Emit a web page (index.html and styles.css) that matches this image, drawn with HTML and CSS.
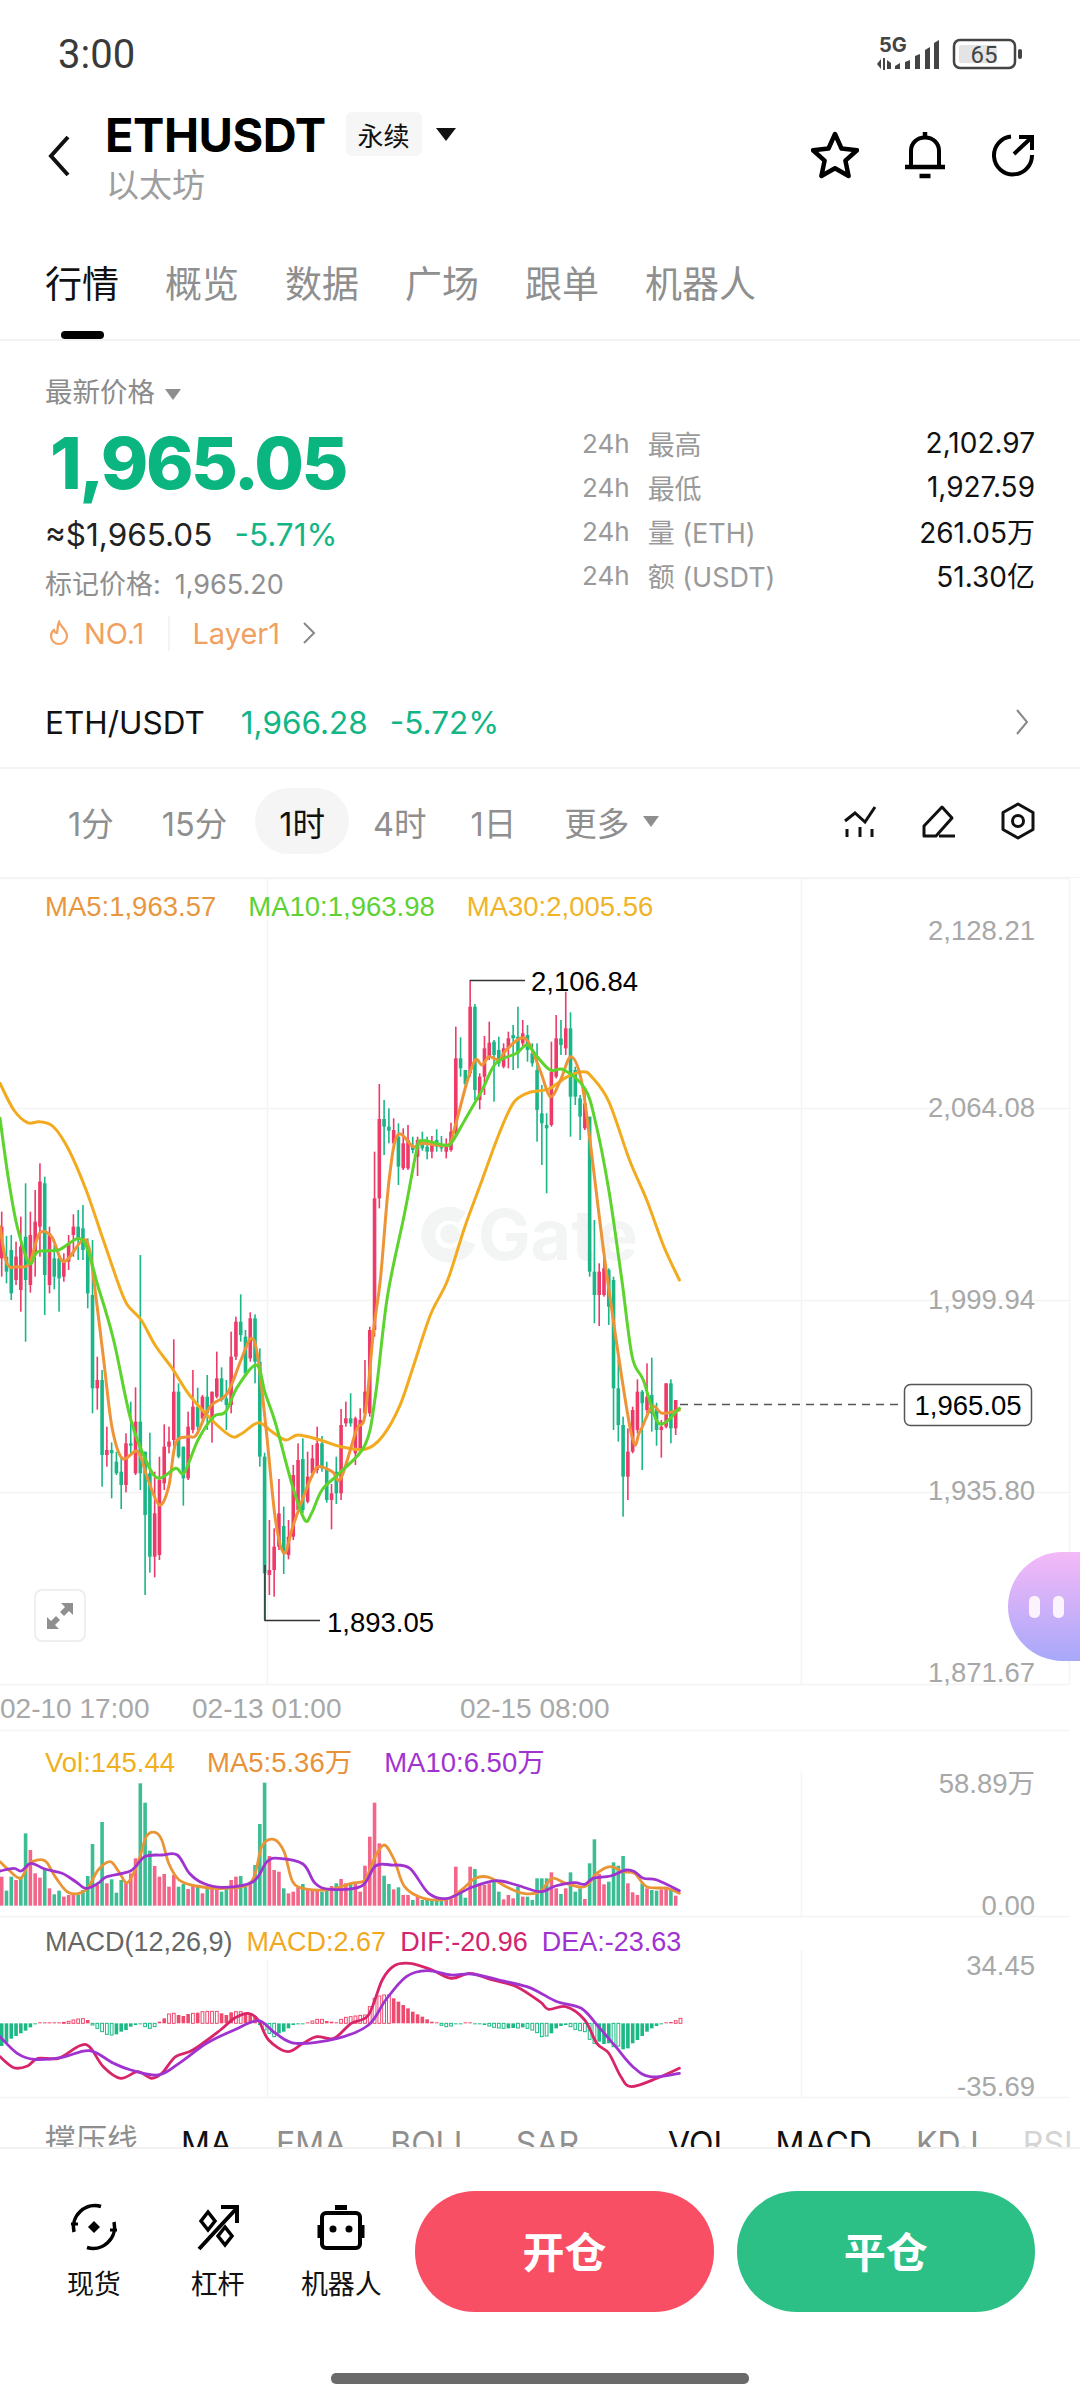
FILE: index.html
```html
<!DOCTYPE html>
<html lang="zh">
<head>
    <meta charset="utf-8">
    <title>ETHUSDT</title>
    <link rel="stylesheet" href="styles.css">
</head>
<body>
<div class="page">

    <!-- status bar -->
    <div class="status-bar">
        <span class="status-time">3:00</span>
        <svg class="status-icons" width="155" height="40" viewBox="870 34 155 40">
            <text x="879" y="52" class="status-5g">5G</text>
            <path d="M877 64l4-5v10zM883 58h2v12h-2zM887 60l4 3v6h-4z" fill="#444"/>
            <path d="M895 66l5-3v6h-5zM905 62l5-2v9h-5zM915 56l5-2v15h-5zM925 50l5-3v22h-5zM934 43l5-3v29h-5z" fill="#444"/>
            <rect x="954" y="40" width="61" height="28" rx="6" fill="#fff" stroke="#444" stroke-width="2.5"/>
            <rect x="959" y="45" width="38" height="18" rx="2" fill="#e4e4e4"/>
            <rect x="1018" y="49" width="4" height="10" rx="2" fill="#444"/>
            <text x="984" y="63" class="status-battery">65</text>
        </svg>
    </div>

    <!-- pair header -->
    <div class="pair-head">
        <svg class="back-icon" width="24" height="44" viewBox="0 0 24 44">
            <path d="M21 3L4 22l17 19" fill="none" stroke="#111" stroke-width="4"/>
        </svg>
        <div class="pair-title">
            <div class="pair-title-row">
                <span class="pair-name">ETHUSDT</span>
                <span class="pair-chip">永续</span>
                <span class="caret caret-dark"></span>
            </div>
            <div class="pair-sub">以太坊</div>
        </div>
        <div class="pair-actions">
            <svg width="48" height="48" viewBox="0 0 48 48">
                <path d="M24 3l6.5 14.5 15.5 1.7-11.6 10.4 3.2 15.4L24 37.2 10.400 45l3.200-15.400L2 19.200l15.500-1.700z" fill="none" stroke="#000" stroke-width="4.500" stroke-linejoin="round"/>
            </svg>
            <svg width="44" height="48" viewBox="0 0 44 48">
                <path d="M8 36V20c0-8 6-13.500 14-13.500S36 12 36 20v16" fill="none" stroke="#000" stroke-width="4"/>
                <path d="M2 36h40" stroke="#000" stroke-width="4.500"/>
                <path d="M22 1v6M16.500 45h11" stroke="#000" stroke-width="4.500"/>
            </svg>
            <svg width="44" height="44" viewBox="0 0 44 44">
                <path d="M20 3.500A19 19 0 1 0 41 22" fill="none" stroke="#000" stroke-width="4"/>
                <path d="M23 21L40 5M28 4h13v13" fill="none" stroke="#000" stroke-width="4"/>
            </svg>
        </div>
    </div>

    <!-- tabs -->
    <div class="tabs">
        <span class="tab tab-active">行情</span>
        <span class="tab">概览</span>
        <span class="tab">数据</span>
        <span class="tab">广场</span>
        <span class="tab">跟单</span>
        <span class="tab">机器人</span>
    </div>

    <!-- price summary -->
    <div class="summary">
        <div class="summary-left">
            <div class="price-label">最新价格 <span class="caret caret-gray"></span></div>
            <div class="price-main">1,965.05</div>
            <div class="price-sub">≈$1,965.05<span class="price-change">-5.71%</span></div>
            <div class="price-mark">标记价格:<span class="price-mark-value">1,965.20</span></div>
            <div class="price-tags">
                <svg width="22" height="26" viewBox="0 0 22 26">
                    <path d="M11 2c1 4 8 8 8 14a8 8 0 0 1-16 0c0-3 1.500-5 3-6 .5 2 1.500 3 3 3 1-3 0-7 2-11z" fill="none" stroke="#f2a262" stroke-width="2.200"/>
                </svg>
                <span class="tag-rank">NO.1</span>
                <span class="tag-name">Layer1</span>
                <svg width="14" height="22" viewBox="0 0 14 22">
                    <path d="M2 1l10 10L2 21" fill="none" stroke="#888" stroke-width="2"/>
                </svg>
            </div>
        </div>
        <div class="summary-right">
            <div class="stat-row"><span class="stat-period">24h</span><span class="stat-name">最高</span><span class="stat-value">2,102.97</span></div>
            <div class="stat-row"><span class="stat-period">24h</span><span class="stat-name">最低</span><span class="stat-value">1,927.59</span></div>
            <div class="stat-row"><span class="stat-period">24h</span><span class="stat-name">量 (ETH)</span><span class="stat-value">261.05万</span></div>
            <div class="stat-row"><span class="stat-period">24h</span><span class="stat-name">额 (USDT)</span><span class="stat-value">51.30亿</span></div>
        </div>
    </div>

    <!-- spot row -->
    <div class="spot-row">
        <span class="spot-name">ETH/USDT</span>
        <span class="spot-price">1,966.28</span>
        <span class="spot-change">-5.72%</span>
        <svg class="spot-arrow" width="14" height="26" viewBox="0 0 14 26">
            <path d="M2 1l10 12L2 25" fill="none" stroke="#888" stroke-width="2"/>
        </svg>
    </div>

    <!-- interval bar -->
    <div class="interval-bar">
        <span class="interval">1分</span>
        <span class="interval interval-wide">15分</span>
        <span class="interval interval-active">1时</span>
        <span class="interval interval-tight">4时</span>
        <span class="interval">1日</span>
        <span class="interval">更多 <span class="caret caret-gray"></span></span>
        <div class="interval-tools">
            <svg width="34" height="34" viewBox="0 0 34 34">
                <path d="M2 17l10-8 10 9L32 3" fill="none" stroke="#111" stroke-width="3"/>
                <path d="M4 25v8M17 23v10M29 25v8" stroke="#111" stroke-width="3"/>
            </svg>
            <svg width="34" height="34" viewBox="0 0 34 34">
                <path d="M2 32V22L20 3l10 11-16 18z" fill="none" stroke="#111" stroke-width="3" stroke-linejoin="round"/>
                <path d="M17 32h16" stroke="#111" stroke-width="3"/>
            </svg>
            <svg width="34" height="38" viewBox="0 0 34 38">
                <path d="M17 2l15 8.500v17L17 36 2 27.500v-17z" fill="none" stroke="#111" stroke-width="3" stroke-linejoin="round"/>
                <circle cx="17" cy="19" r="5.500" fill="none" stroke="#111" stroke-width="3"/>
            </svg>
        </div>
    </div>

    <!-- main kline panel -->
    <div class="panel panel-kline">
        <svg id="klineChart" class="panel-chart" width="1080" height="852" viewBox="0 878 1080 852">
            <g class="watermark">
                <path d="M462 1218a21 21 0 1 0 7 24" fill="none" stroke="#f3f5f5" stroke-width="14"/>
                <circle cx="450" cy="1234" r="10" fill="#f3f5f5"/>
                <text x="478" y="1260" class="watermark-text">Gate</text>
            </g>
            <g id="klineGrid"></g>
            <g id="klineCandles"></g>
            <g id="klineLines"></g>
            <path d="M470 980.500h55M265 1565v55.500h55" fill="none" stroke="#333" stroke-width="1.500"/>
            <text x="531" y="991" class="chart-note">2,106.84</text>
            <text x="327" y="1632" class="chart-note">1,893.05</text>
            <path d="M680 1404.500h224" stroke="#555" stroke-width="1.500" stroke-dasharray="8 6"/>
            <rect x="904.500" y="1384.500" width="127" height="41" rx="6" fill="#fff" stroke="#555" stroke-width="1.500"/>
            <text x="968" y="1415" class="chart-note chart-note-mid">1,965.05</text>
            <text x="1035" y="940" class="axis-label">2,128.21</text>
            <text x="1035" y="1117" class="axis-label">2,064.08</text>
            <text x="1035" y="1309" class="axis-label">1,999.94</text>
            <text x="1035" y="1500" class="axis-label">1,935.80</text>
            <text x="1035" y="1682" class="axis-label">1,871.67</text>
            <text x="0" y="1718" class="time-label">02-10 17:00</text>
            <text x="192" y="1718" class="time-label">02-13 01:00</text>
            <text x="460" y="1718" class="time-label">02-15 08:00</text>
        </svg>
        <div class="legend legend-kline">
            <span class="ma5">MA5:1,963.57</span>
            <span class="ma10">MA10:1,963.98</span>
            <span class="ma30">MA30:2,005.56</span>
        </div>
        <div class="expand-btn">
            <svg width="30" height="30" viewBox="0 0 30 30">
                <path d="M28 2v12l-4-4-5 5-4-4 5-5-4-4zM2 28V16l4 4 5-5 4 4-5 5 4 4z" fill="#8f8f8f"/>
            </svg>
        </div>
        <div class="assistant-bubble">
            <span class="assistant-eye"></span>
            <span class="assistant-eye"></span>
        </div>
    </div>

    <!-- volume panel -->
    <div class="panel panel-vol">
        <svg id="volChart" class="panel-chart" width="1080" height="187" viewBox="0 1730 1080 187">
            <g id="volGrid"></g>
            <g id="volBars"></g>
            <g id="volLines"></g>
            <text x="1035" y="1793" class="axis-label">58.89万</text>
            <text x="1035" y="1915" class="axis-label">0.00</text>
        </svg>
        <div class="legend legend-vol">
            <span class="vol-now">Vol:145.44</span>
            <span class="vol-ma5">MA5:5.36万</span>
            <span class="vol-ma10">MA10:6.50万</span>
        </div>
    </div>

    <!-- macd panel -->
    <div class="panel panel-macd">
        <svg id="macdChart" class="panel-chart" width="1080" height="181" viewBox="0 1917 1080 181">
            <g id="macdGrid"></g>
            <g id="macdBars"></g>
            <g id="macdLines"></g>
            <text x="1035" y="1975" class="axis-label">34.45</text>
            <text x="1035" y="2096" class="axis-label">-35.69</text>
        </svg>
        <div class="legend legend-macd">
            <span class="macd-name">MACD(12,26,9)</span>
            <span class="macd-now">MACD:2.67</span>
            <span class="macd-dif">DIF:-20.96</span>
            <span class="macd-dea">DEA:-23.63</span>
        </div>
    </div>

    <!-- indicator row, cut off by the bottom bar -->
    <div class="indicator-row">
        <span class="indicator indicator-first">撑压线</span>
        <span class="indicator indicator-on">MA</span>
        <span class="indicator">EMA</span>
        <span class="indicator">BOLL</span>
        <span class="indicator">SAR</span>
        <span class="indicator-split"></span>
        <span class="indicator indicator-on">VOL</span>
        <span class="indicator indicator-on">MACD</span>
        <span class="indicator">KDJ</span>
        <span class="indicator indicator-faded">RSI</span>
    </div>

    <!-- bottom actions -->
    <div class="bottom-bar">
        <div class="bottom-row">
            <div class="bottom-item">
                <svg width="48" height="48" viewBox="0 0 48 48">
                    <path d="M4 29A21.500 21.500 0 0 1 31 3.500M17 44.500A21.500 21.500 0 0 0 44 19" fill="none" stroke="#000" stroke-width="3.500"/>
                    <path d="M1 21h7M40 27h7" stroke="#000" stroke-width="3"/>
                    <path d="M24 18l6 6-6 6-6-6z" fill="#000"/>
                </svg>
                <span class="bottom-label">现货</span>
            </div>
            <div class="bottom-item">
                <svg width="48" height="48" viewBox="0 0 48 48">
                    <path d="M5 46L42 6M27 4h16v16" fill="none" stroke="#000" stroke-width="4"/>
                    <path d="M14 9l7 9-7 9-7-9zM31 24l7 9-7 9-7-9z" fill="none" stroke="#000" stroke-width="3.500"/>
                </svg>
                <span class="bottom-label">杠杆</span>
            </div>
            <div class="bottom-item">
                <svg width="48" height="48" viewBox="0 0 48 48">
                    <path d="M18 2h12v5H18z" fill="#000"/>
                    <rect x="5" y="10" width="38" height="35" rx="4" fill="none" stroke="#000" stroke-width="4"/>
                    <path d="M2 22v13M46 22v13" stroke="#000" stroke-width="3"/>
                    <circle cx="16" cy="26" r="3.500" fill="#000"/>
                    <circle cx="32" cy="26" r="3.500" fill="#000"/>
                </svg>
                <span class="bottom-label">机器人</span>
            </div>
            <div class="trade-btn trade-open">开仓</div>
            <div class="trade-btn trade-close">平仓</div>
        </div>
        <div class="home-indicator"></div>
    </div>
</div>
<script src="chart.js"></script>
</body>
</html>
```

FILE: styles.css
```css
* {
    box-sizing: border-box;
}

body {
    margin: 0;
    background-color: #ffffff;
    font-family: "Inter", "Noto Sans CJK SC", sans-serif;
    color: #111111;
}

.page {
    position: relative;
    width: 1080px;
    height: 2400px;
    overflow: hidden;
}

/* status bar */
.status-bar {
    display: flex;
    align-items: center;
    justify-content: space-between;
    height: 108px;
    padding: 0 55px 0 58px;
}
.status-time {
    font-family: "Roboto", sans-serif;
    font-size: 40px;
    color: #3a3a3a;
}
.status-5g {
    font-family: "Inter", sans-serif;
    font-size: 20px;
    font-weight: 700;
    fill: #444444;
}
.status-battery {
    font-family: "Roboto", sans-serif;
    font-size: 24px;
    fill: #444444;
    text-anchor: middle;
}

/* pair header */
.pair-head {
    display: flex;
    align-items: flex-start;
    height: 104px;
    padding: 0 45px 0 47px;
}
.back-icon {
    margin-top: 26px;
}
.pair-title {
    margin-left: 34px;
}
.pair-title-row {
    display: flex;
    align-items: center;
    height: 52px;
}
.pair-name {
    font-size: 47px;
    font-weight: 700;
    letter-spacing: -0.5px;
    color: #000000;
}
.pair-chip {
    display: flex;
    align-items: center;
    justify-content: center;
    width: 76px;
    height: 44px;
    margin-left: 20px;
    border-radius: 6px;
    background-color: #f6f6f6;
    font-size: 26px;
}
.caret {
    display: inline-block;
    width: 0;
    height: 0;
    border-style: solid;
    border-color: transparent;
    border-bottom-width: 0;
}
.caret-dark {
    margin-left: 14px;
    border-width: 13px 10px 0;
    border-top-color: #111111;
}
.caret-gray {
    margin-left: 2px;
    border-width: 11px 8px 0;
    border-top-color: #8e8e8e;
    vertical-align: middle;
}
.pair-sub {
    margin-left: 1px;
    font-size: 33px;
    line-height: 50px;
    color: #9e9e9e;
}
.pair-actions {
    display: flex;
    align-items: center;
    gap: 44px;
    margin-left: auto;
    margin-top: 23px;
}

/* tabs */
.tabs {
    display: flex;
    gap: 46px;
    height: 129px;
    padding: 51px 0 0 45px;
    border-bottom: 2px solid #f3f3f3;
}
.tab {
    font-size: 37px;
    line-height: 44px;
    color: #8f8f8f;
}
.tab-active {
    display: flex;
    flex-direction: column;
    align-items: center;
    color: #111111;
}
.tab-active::after {
    content: "";
    width: 43px;
    height: 8px;
    margin-top: 24px;
    border-radius: 4px;
    background-color: #000000;
}

/* price summary */
.summary {
    display: flex;
    height: 311px;
    padding: 31px 45px 0;
}
.summary-left {
    width: 537px;
}
.price-label {
    font-size: 27.500px;
    line-height: 40px;
    color: #8c8c8c;
}
.price-main {
    margin-left: 5px;
    font-size: 72px;
    font-weight: 800;
    line-height: 102px;
    letter-spacing: -2.600px;
    color: #0bb57f;
}
.price-sub {
    font-size: 31.500px;
    line-height: 42px;
    color: #222222;
}
.price-change {
    margin-left: 22px;
    color: #12b585;
}
.price-mark {
    font-size: 27px;
    line-height: 58px;
    color: #8f8f8f;
}
.price-mark-value {
    margin-left: 14px;
}
.price-tags {
    display: flex;
    align-items: center;
    height: 38px;
    font-size: 29px;
    color: #f0a161;
}
.price-tags svg:first-child {
    margin-left: 3px;
}
.tag-rank {
    margin-left: 14px;
    padding-right: 24px;
    border-right: 2px solid #f3f3f3;
}
.tag-name {
    margin-left: 22px;
    margin-right: 22px;
}
.summary-right {
    flex: 1;
    padding-top: 49px;
}
.stat-row {
    display: flex;
    height: 44px;
    align-items: center;
    font-size: 27px;
    color: #9a9a9a;
}
.stat-period {
    font-size: 26px;
}
.stat-name {
    margin-left: 18px;
}
.stat-value {
    margin-left: auto;
    font-size: 28px;
    color: #111111;
}

/* spot row */
.spot-row {
    display: flex;
    align-items: center;
    height: 117px;
    padding: 25px 51px 0 45px;
    border-bottom: 2px solid #f3f3f3;
    font-size: 31.500px;
}
.spot-price {
    margin-left: 36px;
    color: #12b585;
}
.spot-change {
    margin-left: 22px;
    color: #12b585;
}
.spot-arrow {
    margin-left: auto;
}

/* interval bar */
.interval-bar {
    display: flex;
    align-items: center;
    height: 109px;
    padding: 0 45px 4px 44px;
    border-bottom: 1px solid #f3f3f3;
    font-size: 32.500px;
    color: #8f8f8f;
}
.interval {
    display: flex;
    align-items: center;
    height: 66px;
    padding: 0 24px;
}
.interval .caret {
    margin-left: 14px;
}
.interval-wide {
    padding-right: 28px;
}
.interval-tight {
    padding-right: 20px;
}
.interval-active {
    border-radius: 33px;
    background-color: #f5f5f5;
    color: #111111;
}
.interval-tools {
    display: flex;
    align-items: center;
    gap: 45px;
    margin-left: auto;
}

/* chart panels */
.panel {
    position: relative;
}
.panel-kline {
    height: 852px;
}
.panel-vol {
    height: 187px;
}
.panel-macd {
    height: 181px;
}
.panel-chart {
    display: block;
    overflow: visible;
}
.legend {
    position: absolute;
    left: 45px;
    display: flex;
    font-family: "Liberation Sans", "Noto Sans CJK SC", sans-serif;
    font-size: 27.500px;
    line-height: 34px;
    white-space: nowrap;
}
.legend-kline {
    top: 12px;
    gap: 32px;
}
.legend-vol {
    top: 16px;
    gap: 32px;
}
.legend-macd {
    top: 8px;
    gap: 14px;
    font-size: 27px;
}
.ma5 { color: #e8973f; }
.ma10 { color: #5dd235; }
.ma30 { color: #f0b429; }
.vol-now { color: #f0b020; }
.vol-ma5 { color: #e8923a; }
.vol-ma10 { color: #a033d0; }
.macd-name { color: #666666; }
.macd-now { color: #f0a81e; }
.macd-dif { color: #d2246f; }
.macd-dea { color: #a033d0; }

.axis-label {
    font-family: "Liberation Sans", "Noto Sans CJK SC", sans-serif;
    font-size: 27.500px;
    fill: #a8a8a8;
    text-anchor: end;
}
.time-label {
    font-family: "Liberation Sans", sans-serif;
    font-size: 28px;
    fill: #a8a8a8;
}
.chart-note {
    font-family: "Liberation Sans", sans-serif;
    font-size: 27.500px;
    fill: #000000;
}
.chart-note-mid {
    text-anchor: middle;
}
.watermark-text {
    font-family: "Inter", sans-serif;
    font-size: 70px;
    font-weight: 700;
    fill: #f3f5f5;
}

/* overlays on the kline canvas */
.expand-btn {
    position: absolute;
    left: 34px;
    top: 711px;
    display: flex;
    align-items: center;
    justify-content: center;
    width: 52px;
    height: 53px;
    border: 2px solid #efefef;
    border-radius: 8px;
    background-color: #ffffff;
}
.assistant-bubble {
    position: absolute;
    right: 0;
    top: 674px;
    display: flex;
    align-items: center;
    gap: 13px;
    width: 72px;
    height: 109px;
    padding-left: 21px;
    border-radius: 55px 0 0 55px;
    background: linear-gradient(#f4b9f7, #a8a8fa);
}
.assistant-eye {
    width: 11px;
    height: 22px;
    border-radius: 5px;
    background-color: #fbf3fd;
}

/* indicator row */
.indicator-row {
    display: flex;
    align-items: flex-start;
    height: 49px;
    padding: 27px 0 0 45px;
    overflow: hidden;
    font-size: 32px;
    line-height: 38px;
    color: #8f8f8f;
    white-space: nowrap;
}
.indicator {
    margin-right: 44px;
}
.indicator-first {
    margin: -4px 43px 0 0;
    font-size: 31px;
}
.indicator-on {
    color: #111111;
}
.indicator-split {
    width: 2px;
    height: 30px;
    margin: -7px 45px 0 0;
    background-color: #f0f0f0;
}
.indicator-faded {
    color: #d4d4d4;
}

/* bottom actions */
.bottom-bar {
    height: 253px;
    padding-top: 42px;
    border-top: 2px solid #f1f1f1;
    background-color: #ffffff;
}
.bottom-row {
    display: flex;
    height: 121px;
    padding: 0 45px 0 32px;
}
.bottom-item {
    display: flex;
    flex-direction: column;
    align-items: center;
    width: 124px;
    padding-top: 12px;
}
.bottom-label {
    margin-top: 14px;
    font-size: 27px;
    line-height: 40px;
    color: #111111;
}
.trade-btn {
    display: flex;
    align-items: center;
    justify-content: center;
    width: 299px;
    height: 121px;
    padding-bottom: 5px;
    border-radius: 60px;
    font-size: 42px;
    font-weight: 700;
    color: #ffffff;
}
.trade-open {
    margin-left: 12px;
    background-color: #f84f65;
}
.trade-close {
    margin-left: 23px;
    background-color: #2dc086;
}
.home-indicator {
    width: 418px;
    height: 11px;
    margin: 61px auto 0;
    border-radius: 5px;
    background-color: #6a6a6a;
}
```

FILE: chart.js
```js
// values below were read off at x * 2.904 and (y - 880) * 3, so turn them back into page pixels
var SVG_NS = "http://www.w3.org/2000/svg";
var STEP = 4.78;
var RED = "#ee3a68";
var GREEN = "#1bb688";

function px(x) { return x / 2.904; }
function py(y) { return 880 + y / 3; }
function barX(i) { return 1.7 + STEP * i; }

function shift(points, dx, dy) {
    return points.map(function (p) { return [p[0] + dx, p[1] + dy]; });
}

function addEl(parent, name, attrs) {
    var el = document.createElementNS(SVG_NS, name);
    for (var key in attrs) el.setAttribute(key, attrs[key]);
    document.getElementById(parent).appendChild(el);
}

function addRect(parent, x, y, w, h, attrs) {
    attrs = attrs || {};
    attrs.x = x; attrs.y = y; attrs.width = w; attrs.height = h;
    addEl(parent, "rect", attrs);
}

// catmull-rom through the points
function smoothPath(points) {
    var pts = points.map(function (p) { return [px(p[0]), py(p[1])]; });
    var d = "M" + pts[0][0].toFixed(1) + " " + pts[0][1].toFixed(1);
    for (var i = 0; i < pts.length - 1; i++) {
        var p0 = pts[Math.max(i - 1, 0)], p1 = pts[i], p2 = pts[i + 1], p3 = pts[Math.min(i + 2, pts.length - 1)];
        var c1x = p1[0] + (p2[0] - p0[0]) / 6, c1y = p1[1] + (p2[1] - p0[1]) / 6;
        var c2x = p2[0] - (p3[0] - p1[0]) / 6, c2y = p2[1] - (p3[1] - p1[1]) / 6;
        d += "C" + [c1x, c1y, c2x, c2y, p2[0], p2[1]].map(function (n) { return n.toFixed(1); }).join(" ");
    }
    return d;
}

function addLine(parent, points, color, width) {
    addEl(parent, "path", {
        d: smoothPath(points), fill: "none", stroke: color,
        "stroke-width": width, "stroke-linejoin": "round", "stroke-linecap": "round"
    });
}

// grid lines
["M0 878.500H1069", "M0 1108.500H1069", "M0 1300.500H1069", "M0 1492.500H1069", "M0 1684.500H1069", "M267.500 878V1684", "M801.500 878V1684", "M1069.500 878V1684", "M0 1730.500H1069"].forEach(function (d) {
    addEl("klineGrid", "path", { d: d, stroke: "#f4f4f4", "stroke-width": 1.5 });
});
["M801.500 1772V1917", "M0 1916.500H1069"].forEach(function (d) {
    addEl("volGrid", "path", { d: d, stroke: "#f4f4f4", "stroke-width": 1.5 });
});
["M267.500 1960V2098", "M801.500 1950V2098", "M0 2097.500H1069"].forEach(function (d) {
    addEl("macdGrid", "path", { d: d, stroke: "#f4f4f4", "stroke-width": 1.5 });
});

// candles: colour, wick top, body top, body bottom, wick bottom
var candles = [
    ["r",995,1040,1135,1190],["g",1068,1130,1175,1210],["g",1065,1110,1240,1260],["r",1085,1130,1200,1215],["r",1010,1100,1230,1295],
    ["g",910,1070,1200,1385],["r",995,1065,1215,1238],["r",930,1025,1120,1190],["r",850,905,1040,1130],["g",890,910,1185,1305],
    ["r",1040,1060,1215,1240],["g",1095,1135,1190,1228],["g",1130,1135,1195,1295],["r",1120,1145,1190,1205],["r",1065,1090,1145,1170],
    ["r",1003,1040,1065,1130],["g",990,1040,1080,1140],["g",975,1045,1110,1140],["g",1075,1110,1240,1285],["g",1080,1245,1525,1600],
    ["r",1430,1500,1525,1589],["g",1470,1500,1725,1820],["r",1640,1710,1725,1760],["g",1687,1710,1720,1855],["g",1715,1745,1780,1785],
    ["g",1730,1775,1815,1887],["r",1660,1690,1815,1837],["g",1565,1690,1697,1720],["r",1522,1625,1780,1785],["g",1125,1625,1780,1830],
    ["g",1715,1715,1905,2145],["g",1658,1780,2030,2078],["r",1775,1900,2030,2092],["r",1730,1800,2025,2040],["r",1633,1700,1810,1830],
    ["r",1640,1685,1700,1720],["r",1378,1535,1680,1700],["g",1510,1535,1730,1735],["g",1700,1700,1795,1877],["r",1595,1640,1795,1800],
    ["r",1470,1580,1650,1660],["g",1523,1580,1640,1650],["r",1545,1550,1615,1620],["g",1485,1550,1600,1650],["r",1535,1535,1620,1688],
    ["r",1415,1495,1550,1555],["g",1462,1495,1560,1565],["g",1500,1555,1575,1650],["r",1355,1430,1575,1600],["r",1310,1325,1430,1440],
    ["g",1243,1325,1365,1385],["g",1350,1370,1480,1490],["r",1297,1315,1435,1445],["g",1303,1315,1445,1510],["g",1405,1445,1730,1760],
    ["g",1718,1730,2080,2220],["r",1920,2070,2085,2145],["r",1945,2000,2070,2150],["r",1797,1900,2000,2010],["g",1880,1938,2020,2082],
    ["r",1920,1970,2025,2038],["r",1755,1785,1970,1980],["r",1690,1740,1890,1900],["g",1675,1737,1890,1900],["r",1715,1790,1865,1870],
    ["r",1695,1735,1780,1790],["r",1640,1690,1770,1780],["g",1668,1690,1765,1775],["g",1745,1765,1860,1868],["r",1812,1840,1860,1948],
    ["g",1730,1775,1840,1872],["r",1587,1635,1840,1860],["r",1565,1615,1630,1640],["g",1540,1615,1630,1640],["r",1610,1615,1720,1755],
    ["r",1585,1620,1710,1720],["r",1440,1535,1600,1610],["r",1340,1350,1600,1610],["r",815,955,1350,1370],["r",612,717,955,985],
    ["g",660,717,740,825],["g",685,740,752,790],["r",715,750,790,800],["g",730,770,860,915],["r",745,790,865,870],
    ["r",735,780,865,870],["g",770,800,810,820],["r",770,780,830,888],["g",755,785,805,812],["g",770,800,815,838],
    ["r",768,795,815,835],["g",748,780,800,815],["g",768,795,805,815],["r",775,795,815,835],["r",728,755,810,815],
    ["r",440,535,760,770],["g",472,535,565,590],["g",570,570,612,620],["r",300,380,580,590],["g",372,380,630,660],
    ["r",580,590,660,688],["r",468,505,590,645],["r",425,488,530,540],["g",480,485,525,665],["g",470,510,550,560],
    ["r",490,505,560,565],["r",455,475,505,565],["g",435,465,475,570],["g",380,470,520,565],["r",420,460,490,500],
    ["g",435,465,510,545],["g",490,520,550,560],["g",490,570,690,785],["g",615,700,730,855],["g",700,735,745,940],
    ["r",485,575,735,740],["r",405,475,590,595],["g",420,475,495,525],["r",335,445,505,525],["g",397,445,650,770],
    ["g",560,570,650,675],["g",645,655,710,780],["r",625,670,745,750],["g",710,710,1175,1190],["g",1020,1175,1245,1330],
    ["r",1150,1175,1245,1338],["r",1130,1165,1245,1250],["g",1165,1170,1280,1335],["g",1190,1200,1525,1650],["g",1438,1525,1635,1685],
    ["g",1610,1635,1790,1910],["r",1645,1715,1790,1860],["r",1580,1590,1715,1720],["r",1498,1535,1650,1660],["g",1530,1535,1570,1770],
    ["r",1450,1550,1590,1600],["g",1433,1545,1600,1655],["g",1568,1585,1650,1697],["r",1620,1640,1650,1733],["r",1510,1510,1640,1645],
    ["g",1498,1510,1645,1690],["r",1560,1560,1645,1665]
];
candles.forEach(function (c, i) {
    var x = barX(i), color = c[0] === "r" ? RED : GREEN;
    addRect("klineCandles", x - 0.8, py(c[1]), 1.6, (c[4] - c[1]) / 3, { fill: color });
    addRect("klineCandles", x - 1.8, py(c[2]), 3.6, Math.max(c[3] - c[2], 3) / 3, { fill: color });
});

// moving averages on the kline
var ma30 = [[0,610],[40,690],[80,728],[115,725],[155,740],[200,810],[250,930],[300,1080],[345,1215]]
    .concat(shift([[370,75],[410,120],[450,195],[500,265],[550,345],[610,415],[670,468],[700,462],[750,428],[790,455],[830,480],[865,465],[930,480],[990,500],[1060,508],[1110,470],[1160,380],[1200,260],[1250,105],[1300,0]], 0, 1200))
    .concat([[1350,1040],[1400,900],[1450,760],[1490,670],[1530,640],[1568,632]])
    .concat(shift([[30,625],[80,590],[125,575],[150,590],[200,665],[260,840],[310,960],[360,1100],[405,1200]], 1568, 0));
var ma10 = [[0,715],[25,900],[50,1040],[85,1150],[110,1115],[170,1110],[240,1080]]
    .concat(shift([[285,20],[330,180],[380,420],[430,555],[462,595],[510,565],[535,578],[575,480],[620,410],[655,395],[690,320],[745,255],[770,340],[800,430],[850,620],[885,720],[905,700],[935,630],[985,580],[1060,495],[1090,350],[1125,50]], 0, 1200))
    .concat([[1175,1000],[1210,810],[1225,782],[1290,795],[1310,790],[1350,720],[1400,630],[1440,550],[1500,520],[1530,495],[1560,530]])
    .concat(shift([[30,570],[70,570],[130,625],[160,720],[200,930],[237,1195]], 1568, 0))
    .concat(shift([[268,230],[300,300],[345,430],[405,385]], 1568, 1200));
var ma5 = [[0,1040],[20,1150],[50,1160],[85,1150],[115,1060],[150,1070],[185,1145],[240,1080],[260,1110]]
    .concat(shift([[275,20],[300,230],[325,440],[355,535],[400,515],[430,600],[463,675],[490,620],[510,490],[545,470],[570,465],[610,380],[660,340],[700,240],[730,175],[750,240],[775,470],[800,720],[825,820],[850,740],[885,640],[905,590],[925,560],[965,575],[990,595],[1035,450],[1060,405],[1085,150]], 0, 1200))
    .concat([[1105,1195],[1130,900],[1155,765],[1200,800],[1225,790],[1300,795],[1320,745],[1355,610],[1380,540],[1400,555],[1420,530],[1450,540],[1470,510],[1525,475]])
    .concat(shift([[0,570],[30,650],[60,600],[90,530],[120,600],[145,780],[195,1190]], 1568, 0))
    .concat(shift([[265,460],[290,455],[325,380],[355,400],[405,390]], 1568, 1200));
addLine("klineLines", ma30, "#f2ab1e", 3);
addLine("klineLines", ma5, "#ee9436", 3);
addLine("klineLines", ma10, "#5dd32e", 3);

// volume, y is read off the 1700 based crop
function vy(y) { return 1700 + y / 3; }
var volumes = "r530 g572 g530 r540 g530 g400 r450 r520 r533 g510 r565 g583 g572 r590 r585 r580 g583 g570 g528 g432 r555 g366 r550 g538 g578 g540 r545 r520 r475 g250 g308 g452 r498 r530 r522 r560 r525 g560 g552 r567 r555 g560 r580 g565 r560 r560 g575 g565 r540 r530 g528 g555 r550 g495 g372 g248 r468 r510 r515 g565 r580 r575 r562 g552 r565 r570 r570 g575 g572 r558 g550 r537 r550 g550 r550 r575 r497 r410 r308 r430 g527 g552 r568 g562 r585 r585 g600 r590 g600 g600 g600 g600 g600 r600 r597 r500 g580 g593 r500 g507 r550 r555 r550 g545 g575 r598 r585 r595 g560 r590 g590 g600 g535 g535 g535 r517 r565 g582 r565 g517 g575 g565 r597 g490 g418 r522 r553 g545 g487 g497 g468 r550 r577 r585 g550 r565 g570 g572 r568 r560 g570 r587".split(" ");
volumes.forEach(function (v, i) {
    var top = parseInt(v.slice(1));
    addRect("volBars", barX(i) - 1.8, vy(top), 3.6, (617 - top) / 3, { fill: v[0] === "r" ? "#f2668a" : "#3dbd94" });
});

function toPanel(points, top) {
    // map onto the same helper as the kline: y there is 880 + v / 3
    return points.map(function (p) { return [p[0], p[1] + (top - 880) * 3]; });
}
var volMa5 = [[0,485],[25,510],[60,535],[85,490],[130,482],[160,530],[200,578],[250,570],[285,510],[320,485],[345,515],[370,548],[400,490],[425,410],[450,397],[470,420],[490,490],[520,540],[570,558],[650,565],[730,545],[760,440],[795,418],[825,455],[850,545],[890,567],[960,568],[1020,550],[1060,540],[1085,480],[1115,435],[1145,480],[1175,560],[1230,595],[1300,597],[1340,570],[1380,535],[1420,532],[1470,560],[1520,580]]
    .concat(shift([[0,575],[35,535],[75,550],[130,560],[165,520],[205,500],[240,515],[275,520],[310,560],[370,565],[405,580]], 1568, 0));
var volMa10 = [[0,513],[40,505],[62,513],[90,490],[130,507],[180,520],[220,545],[250,565],[285,550],[310,530],[380,512],[420,470],[470,465],[515,465],[550,520],[590,550],[650,562],[735,545],[775,485],[810,475],[880,492],[915,550],[960,568],[1050,558],[1090,498],[1135,495],[1190,505],[1245,580],[1300,595],[1370,562],[1440,542],[1500,555]]
    .concat(shift([[0,575],[45,558],[100,548],[130,553],[155,535],[205,528],[250,510],[275,515],[300,535],[340,540],[405,572]], 1568, 0));
addLine("volLines", toPanel(volMa5, 1700), "#ea9535", 2.8);
addLine("volLines", toPanel(volMa10, 1700), "#a033d0", 2.8);

// macd histogram: + is red, - is green, h is hollow
var macd = "-68 -58 -46 -38 -30 -22 -12 -3 1 1 2 2 1 3h 6h 10h 13h 14h 10 -5h -15h -25h -33h -35h -33 -25 -20 -10 -5 -3 -10h -15h -10h 5 15 28h 30h 25 22 28 30h 32 35h 36h 36h 36h 30 25 33 35h 35h 30 28 20 -5 -20h -30h -40h -30 -25 -15 -5 -2 -1 2 7h 12h 12h 7 5 3 12h 18h 20h 22h 24h 25h 50h 75h 82h 85h 85h 75 65 55 45 35 27 20 12 5 1 -6h -10h -8h -2 -1 1 3 -1 -3 -5 -8h -12h -14h -15h -15 -14 -14h -12 -15h -20h -28h -40h -38h -30 -15 -8 -5 -10h -18h -22h -25h -48h -60h -55 -62 -60 -70h -68h -78 -75 -60 -50 -38 -25 -15 -8 -3 3 4 8h 15h".split(" ");
macd.forEach(function (m, i) {
    var hollow = m.indexOf("h") >= 0;
    var val = parseInt(m);
    var color = val > 0 ? "#ef4a6e" : "#1cb984";
    var h = Math.max(Math.abs(val), 3) / 3;
    var y = val > 0 ? vy(970) - h : vy(970);
    if (hollow) {
        addRect("macdBars", barX(i) - 1.4, y, 2.8, h, { fill: "#fff", stroke: color, "stroke-width": 1 });
    } else {
        addRect("macdBars", barX(i) - 1.8, y, 3.6, h, { fill: color });
    }
});

var dif = [[0,1070],[40,1103],[80,1098],[110,1075],[170,1075],[230,1038],[260,1040],[300,1100],[350,1135],[400,1115],[440,1135],[470,1120],[510,1070],[560,1050],[640,990],[680,955],[720,940],[750,960],[780,1020],[835,1055],[880,1030],[920,1010],[970,1015],[1020,970],[1070,945],[1110,840],[1145,797],[1190,790],[1250,808],[1310,835],[1365,820],[1430,840],[1500,860]]
    .concat(shift([[0,905],[25,928],[75,920],[130,960],[165,1030],[200,1060],[235,1130],[265,1160],[340,1135],[405,1105]], 1568, 0));
var dea = [[0,1010],[50,1060],[100,1078],[180,1072],[260,1052],[330,1090],[380,1110],[460,1125],[520,1090],[600,1030],[680,990],[750,962],[800,1000],[860,1030],[980,1015],[1070,975],[1120,900],[1180,830],[1240,812],[1310,825],[1370,822],[1450,840],[1530,860]]
    .concat(shift([[0,878],[50,905],[120,925],[170,980],[220,1040],[270,1100],[320,1130],[405,1120]], 1568, 0));
addLine("macdLines", toPanel(dif, 1700), "#d82468", 2.8);
addLine("macdLines", toPanel(dea, 1700), "#a033d0", 2.8);
```
